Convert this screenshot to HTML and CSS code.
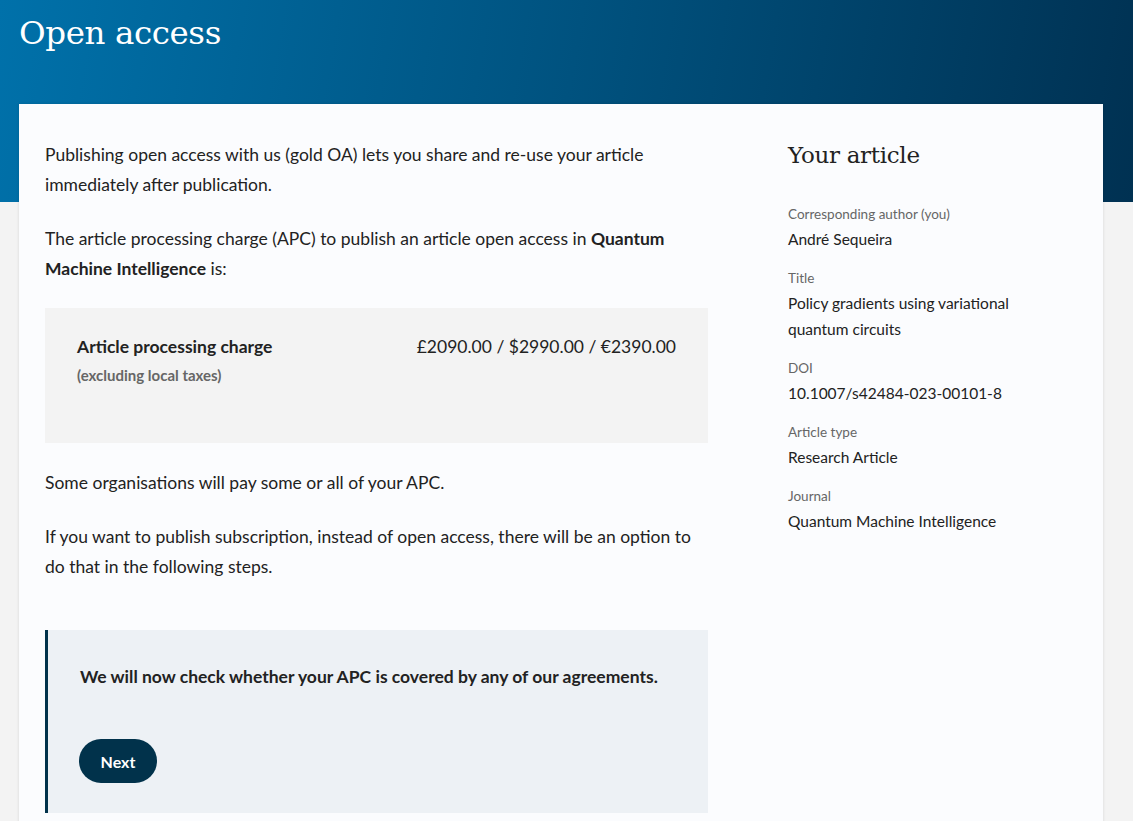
FILE: index.html
```html
<!DOCTYPE html>
<html lang="en">
<head>
<meta charset="utf-8">
<title>Open access</title>
<link rel="stylesheet" href="styles.css">
</head>
<body>
<header class="hero">
  <h1 class="hero-title">Open access</h1>
</header>
<main class="card">
  <section class="main-col">
    <p class="para">Publishing open access with us (gold OA) lets you share and re-use your article immediately after publication.</p>
    <p class="para">The article processing charge (APC) to publish an article open access in <strong>Quantum Machine Intelligence</strong> is:</p>
    <div class="charge-box">
      <div class="charge-label">
        <div class="charge-name">Article processing charge</div>
        <div class="charge-sub">(excluding local taxes)</div>
      </div>
      <div class="charge-price">£2090.00 / $2990.00 / €2390.00</div>
    </div>
    <p class="para">Some organisations will pay some or all of your APC.</p>
    <p class="para">If you want to publish subscription, instead of open access, there will be an option to do that in the following steps.</p>
    <div class="notice">
      <p class="notice-text">We will now check whether your APC is covered by any of our agreements.</p>
      <button class="btn-next" type="button">Next</button>
    </div>
  </section>
  <aside class="side-col">
    <h2 class="side-title">Your article</h2>
    <dl class="meta">
      <div class="meta-item"><dt>Corresponding author (you)</dt><dd>André Sequeira</dd></div>
      <div class="meta-item"><dt>Title</dt><dd>Policy gradients using variational quantum circuits</dd></div>
      <div class="meta-item"><dt>DOI</dt><dd>10.1007/s42484-023-00101-8</dd></div>
      <div class="meta-item"><dt>Article type</dt><dd>Research Article</dd></div>
      <div class="meta-item"><dt>Journal</dt><dd>Quantum Machine Intelligence</dd></div>
    </dl>
  </aside>
</main>
</body>
</html>
```
FILE: styles.css
```css
* { box-sizing: border-box; }
html, body { margin: 0; padding: 0; }
body {
  background: #f3f3f3;
  font-family: "Lato", "Noto Sans", sans-serif;
  color: #222;
  font-size: 17.5px;
  height: 821px;
  overflow: hidden;
}
.hero {
  height: 202px;
  background: linear-gradient(100deg, #0071aa 0%, #00527f 50%, #003152 100%);
  padding: 12px 19px 0;
}
.hero-title {
  margin: 0;
  color: #fff;
  font-family: "DejaVu Serif", serif;
  font-weight: 400;
  font-size: 32.5px;
  line-height: 42px;
  letter-spacing: -0.4px;
}
.card {
  margin: -98px 30px 0 19px;
  background: #fbfcfe;
  box-shadow: 0 0 3px rgba(0,0,0,0.12);
  display: flex;
  padding: 36px 26px 40px;
  gap: 80px;
  min-height: 760px;
}
.main-col { width: 663px; flex: none; }
.para {
  margin: 0 0 24px;
  line-height: 30px;
}
.para strong { font-weight: 700; }
.charge-box {
  background: #f3f3f3;
  display: flex;
  justify-content: space-between;
  padding: 26px 32px 53px;
  margin: 0 0 25px;
}
.charge-name { font-weight: 700; line-height: 26px; }
.charge-sub { font-size: 15px; font-weight: 700; color: #666; line-height: 30px; }
.charge-price { line-height: 26px; }
.notice {
  margin-top: 48px;
  background: #edf1f5;
  border-left: 3px solid #01324b;
  padding: 30px 32px 30px 32px;
  height: 183px;
}
.notice-text { margin: 0 0 45px; font-weight: 700; line-height: 34px; }
.btn-next {
  background: #01324b;
  color: #fff;
  border: 0;
  border-radius: 22px;
  width: 78px;
  height: 44px;
  margin-left: -1px;
  font-family: inherit;
  font-weight: 700;
  font-size: 16px;
  cursor: pointer;
}
.side-col { flex: 1; }
.side-title {
  margin: 0 0 34px;
  font-family: "DejaVu Serif", serif;
  font-weight: 400;
  font-size: 23px;
  line-height: 30px;
  color: #222;
  letter-spacing: -0.3px;
}
.meta { margin: 0; }
.meta-item { margin: 0 0 16px; }
.meta dt { font-size: 13.5px; color: #666; line-height: 20px; margin-bottom: 2px; }
.meta dd { margin: 0; font-size: 15.5px; line-height: 26px; color: #222; width: 250px; }
```
